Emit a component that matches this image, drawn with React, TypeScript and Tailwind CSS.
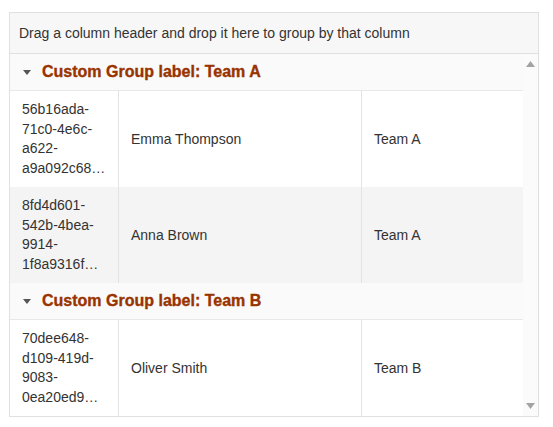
import React from 'react';

type Row = { idLines: string[]; name: string; team: string };

const groups: { label: string; rows: Row[] }[] = [
  {
    label: 'Custom Group label: Team A',
    rows: [
      { idLines: ['56b16ada-', '71c0-4e6c-', 'a622-', 'a9a092c68…'], name: 'Emma Thompson', team: 'Team A' },
      { idLines: ['8fd4d601-', '542b-4bea-', '9914-', '1f8a9316f…'], name: 'Anna Brown', team: 'Team A' },
    ],
  },
  {
    label: 'Custom Group label: Team B',
    rows: [
      { idLines: ['70dee648-', 'd109-419d-', '9083-', '0ea20ed9…'], name: 'Oliver Smith', team: 'Team B' },
    ],
  },
];

const GroupHeader = ({ label, first }: { label: string; first: boolean }) => (
  <div className={`flex items-center bg-[#fafafa] border-b border-[#e8e8e8] ${first ? 'h-[37px]' : 'h-[37px]'}`}>
    <svg width="8" height="5" viewBox="0 0 8 5" className="ml-[13px]">
      <path d="M0 0 L8 0 L4 5 Z" fill="#555555" />
    </svg>
    <span className="ml-[11px] text-[16px] font-bold text-[#993300] [-webkit-text-stroke:0.35px_#993300]">{label}</span>
  </div>
);

const DataRow = ({ row, alt }: { row: Row; alt: boolean }) => (
  <div className={`flex h-[96px] text-[14px] text-[#333333] ${alt ? 'bg-[#f4f4f4]' : 'bg-white'}`}>
    <div className="w-[109px] px-[12px] py-[9px] leading-[19.5px] border-r border-[#e3e3e3]">
      {row.idLines.map((l, i) => (
        <div key={i}>{l}</div>
      ))}
    </div>
    <div className="w-[243px] pl-[12px] flex items-center border-r border-[#e3e3e3]">{row.name}</div>
    <div className="flex-1 pl-[12px] flex items-center">{row.team}</div>
  </div>
);

export default function App() {
  return (
    <div className="pt-[12px] pl-[9px]" style={{ fontFamily: '"Liberation Sans", Arial, sans-serif' }}>
      <div className="w-[530px] h-[405px] border border-[#e0e0e0] flex flex-col">
        <div className="h-[41px] flex items-center px-[9px] bg-[#f7f7f7] border-b border-[#e0e0e0] text-[14px] text-[#333333]">
          Drag a column header and drop it here to group by that column
        </div>
        <div className="flex flex-1">
          <div className="w-[513px]">
            {groups.map((g, gi) => (
              <div key={gi}>
                <GroupHeader label={g.label} first={gi === 0} />
                {g.rows.map((r, ri) => (
                  <DataRow key={ri} row={r} alt={ri % 2 === 1} />
                ))}
              </div>
            ))}
          </div>
          <div className="w-[15px] bg-[#fbfbfb] flex flex-col items-center justify-between pt-[7px] pb-[7px]">
            <svg width="9" height="6" viewBox="0 0 9 6">
              <path d="M4.5 0 L9 6 L0 6 Z" fill="#a3a3a3" />
            </svg>
            <svg width="9" height="6" viewBox="0 0 9 6">
              <path d="M0 0 L9 0 L4.5 6 Z" fill="#a3a3a3" />
            </svg>
          </div>
        </div>
      </div>
    </div>
  );
}
